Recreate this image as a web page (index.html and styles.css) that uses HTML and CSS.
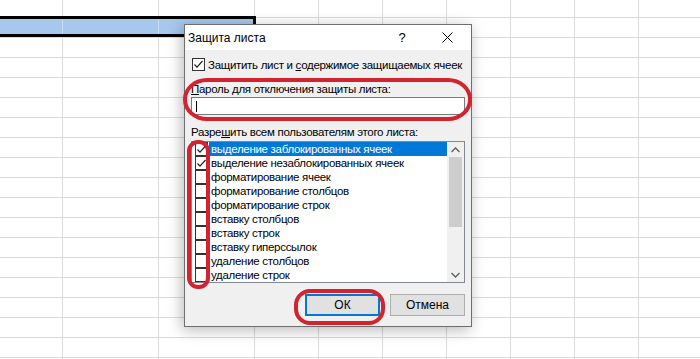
FILE: index.html
```html
<!DOCTYPE html>
<html lang="ru">
<head>
<meta charset="utf-8">
<title>Защита листа</title>
<link rel="stylesheet" href="styles.css">
</head>
<body>
<div class="sheet">
  <p class="r0"><i></i><i></i><i></i><i></i><i></i><i></i><i></i><i></i><i></i><i></i></p>
  <p class="sel"><i></i><i></i><i></i><i></i><i></i><i></i><i></i><i></i><i></i><i></i></p>
  <p><i></i><i></i><i></i><i></i><i></i><i></i><i></i><i></i><i></i><i></i></p>
  <p><i></i><i></i><i></i><i></i><i></i><i></i><i></i><i></i><i></i><i></i></p>
  <p><i></i><i></i><i></i><i></i><i></i><i></i><i></i><i></i><i></i><i></i></p>
  <p><i></i><i></i><i></i><i></i><i></i><i></i><i></i><i></i><i></i><i></i></p>
  <p><i></i><i></i><i></i><i></i><i></i><i></i><i></i><i></i><i></i><i></i></p>
  <p><i></i><i></i><i></i><i></i><i></i><i></i><i></i><i></i><i></i><i></i></p>
  <p><i></i><i></i><i></i><i></i><i></i><i></i><i></i><i></i><i></i><i></i></p>
  <p><i></i><i></i><i></i><i></i><i></i><i></i><i></i><i></i><i></i><i></i></p>
  <p><i></i><i></i><i></i><i></i><i></i><i></i><i></i><i></i><i></i><i></i></p>
  <p><i></i><i></i><i></i><i></i><i></i><i></i><i></i><i></i><i></i><i></i></p>
  <p><i></i><i></i><i></i><i></i><i></i><i></i><i></i><i></i><i></i><i></i></p>
  <p><i></i><i></i><i></i><i></i><i></i><i></i><i></i><i></i><i></i><i></i></p>
  <p><i></i><i></i><i></i><i></i><i></i><i></i><i></i><i></i><i></i><i></i></p>
  <p><i></i><i></i><i></i><i></i><i></i><i></i><i></i><i></i><i></i><i></i></p>
  <p><i></i><i></i><i></i><i></i><i></i><i></i><i></i><i></i><i></i><i></i></p>
  <p><i></i><i></i><i></i><i></i><i></i><i></i><i></i><i></i><i></i><i></i></p>
  <p><i></i><i></i><i></i><i></i><i></i><i></i><i></i><i></i><i></i><i></i></p>
</div>
<div class="sel-outline"></div>

<div class="dlg">
  <div class="titlebar">
    <span class="title">Защита листа</span>
    <span class="help">?</span>
    <span class="close"><svg width="11" height="11" viewBox="0 0 11 11"><path d="M0.5 0.5L10.5 10.5M10.5 0.5L0.5 10.5" stroke="#000" stroke-width="1" fill="none"/></svg></span>
  </div>
  <div class="body">
    <div class="chk-row">
      <span class="cb"><svg width="11" height="11" viewBox="0 0 11 11"><path d="M1.5 5.5L4 8.2L9.5 2" stroke="#222" stroke-width="1.2" fill="none"/></svg></span>
      <span class="chk-text">Защитить лист и <u>с</u>одержимое защищаемых ячеек</span>
    </div>
    <div class="lbl lbl-pass"><u>П</u>ароль для отключения защиты листа:</div>
    <div class="input"><span class="caret"></span></div>
    <div class="lbl lbl-allow">Разре<u>ш</u>ить всем пользователям этого листа:</div>
    <div class="list">
      <div class="items">
        <div class="item sel-item"><span class="cb"><svg width="11" height="11" viewBox="0 0 11 11"><path d="M1.5 5.5L4 8.2L9.5 2" stroke="#222" stroke-width="1.2" fill="none"/></svg></span><span class="txt">выделение заблокированных ячеек</span></div>
        <div class="item"><span class="cb"><svg width="11" height="11" viewBox="0 0 11 11"><path d="M1.5 5.5L4 8.2L9.5 2" stroke="#222" stroke-width="1.2" fill="none"/></svg></span><span class="txt">выделение незаблокированных ячеек</span></div>
        <div class="item"><span class="cb"></span><span class="txt">форматирование ячеек</span></div>
        <div class="item"><span class="cb"></span><span class="txt">форматирование столбцов</span></div>
        <div class="item"><span class="cb"></span><span class="txt">форматирование строк</span></div>
        <div class="item"><span class="cb"></span><span class="txt">вставку столбцов</span></div>
        <div class="item"><span class="cb"></span><span class="txt">вставку строк</span></div>
        <div class="item"><span class="cb"></span><span class="txt">вставку гиперссылок</span></div>
        <div class="item"><span class="cb"></span><span class="txt">удаление столбцов</span></div>
        <div class="item"><span class="cb"></span><span class="txt">удаление строк</span></div>
      </div>
      <div class="scroll">
        <span class="arrow"><svg width="9" height="6" viewBox="0 0 9 6"><path d="M0.5 5L4.5 1L8.5 5" stroke="#606060" stroke-width="1.4" fill="none"/></svg></span>
        <span class="thumb"></span>
        <span class="track"></span>
        <span class="arrow"><svg width="9" height="6" viewBox="0 0 9 6"><path d="M0.5 1L4.5 5L8.5 1" stroke="#606060" stroke-width="1.4" fill="none"/></svg></span>
      </div>
    </div>
    <div class="btns">
      <button class="btn ok">ОК</button>
      <button class="btn">Отмена</button>
    </div>
  </div>
</div>

<div class="ring ring-pass"></div>
<div class="ring ring-checks"></div>
<div class="ring ring-ok"></div>
</body>
</html>
```

FILE: styles.css
```css
* { box-sizing: border-box; margin: 0; padding: 0; }
html, body { width: 700px; height: 359px; overflow: hidden; background: #fff; }
body {
  position: relative;
  font-family: "Liberation Sans", Arial, sans-serif;
  font-size: 11.5px;
  letter-spacing: -0.3px;
  color: #000;
}

/* spreadsheet */
.sheet { display: flex; flex-direction: column; height: 359px; overflow: hidden; }
.sheet p { display: flex; flex: none; height: 20px; border-bottom: 1px solid #dadada; }
.sheet p.r0 { height: 18px; }
.sheet i { flex: none; width: 64px; border-right: 1px solid #dadada; }
.sheet i:nth-child(1) { width: 63px; }
.sheet i:nth-child(2), .sheet i:nth-child(3) { width: 96px; }
.sheet p.sel i:nth-child(-n+3) { background: #a6c8ec; border-right-color: #c6dcf2; }
.sel-outline {
  position: absolute;
  left: -3px; top: 16px;
  width: 259px; height: 21px;
  border: 3px solid #000;
}

/* dialog */
.dlg {
  position: absolute;
  left: 184px; top: 24px;
  width: 288px;
  border: 1px solid #6e6e6e;
  background: #f0f0f0;
  box-shadow: -2px 3px 14px rgba(0,0,0,0.28);
  display: flex; flex-direction: column;
}
.titlebar {
  height: 25px;
  background: #fff;
  display: flex; align-items: center;
  padding-left: 3px;
}
.title { flex: 1; font-size: 12px; letter-spacing: 0; }
.help { width: 20px; font-size: 13px; text-align: center; margin-right: 30px; }
.close { width: 11px; height: 11px; margin-right: 18px; display: flex; }

.body { padding: 8px 6px 10px 6px; display: flex; flex-direction: column; }
.chk-row { display: flex; align-items: center; height: 13px; gap: 3px; padding-left: 1px; white-space: nowrap; }
.cb {
  flex: none;
  width: 13px; height: 13px;
  border: 1px solid #333;
  background: #fff;
  display: flex; align-items: center; justify-content: center;
}
.lbl { height: 14px; line-height: 14px; white-space: nowrap; }
.lbl-pass { margin-top: 11px; }
.input {
  margin-top: 1px;
  height: 18px;
  border: 1px solid #7a7a7a;
  background: #fff;
  padding: 3px 4px;
}
.caret { display: block; width: 1px; height: 11px; background: #000; }
.lbl-allow { margin-top: 10px; }

.list {
  margin-top: 2px;
  height: 142px;
  border: 1px solid #828790;
  background: #fff;
  display: flex;
}
.items { flex: 1; padding-left: 3px; }
.item { height: 14px; display: flex; align-items: center; white-space: nowrap; }
.item .cb { width: 13px; height: 14px; }
.item .txt { flex: 1; height: 14px; line-height: 14px; padding-left: 2px; margin-left: 1px; }
.sel-item .txt { background: #0078d7; color: #fff; }

.scroll { flex: none; width: 17px; background: #f0f0f0; display: flex; flex-direction: column; }
.arrow { height: 15px; display: flex; align-items: center; justify-content: center; }
.thumb { height: 70px; margin: 0 2px; background: #cdcdcd; }
.track { flex: 1; }

.btns { margin-top: 11px; display: flex; justify-content: flex-end; gap: 10px; }
.btn {
  width: 75px; height: 22px;
  font-family: inherit; font-size: 12px; letter-spacing: 0;
  background: #e1e1e1;
  border: 1px solid #adadad;
  color: #000;
}
.btn.ok { border: 2px solid #0078d7; }

/* red annotation rings */
.ring { position: absolute; border: 4px solid #d3232f; }
.ring-pass { left: 183px; top: 78px; width: 289px; height: 43px; border-radius: 24px / 21px; }
.ring-checks { left: 187px; top: 140px; width: 23px; height: 149px; border-radius: 11px; }
.ring-ok { left: 294px; top: 289px; width: 91px; height: 36px; border-radius: 16px; }
```
